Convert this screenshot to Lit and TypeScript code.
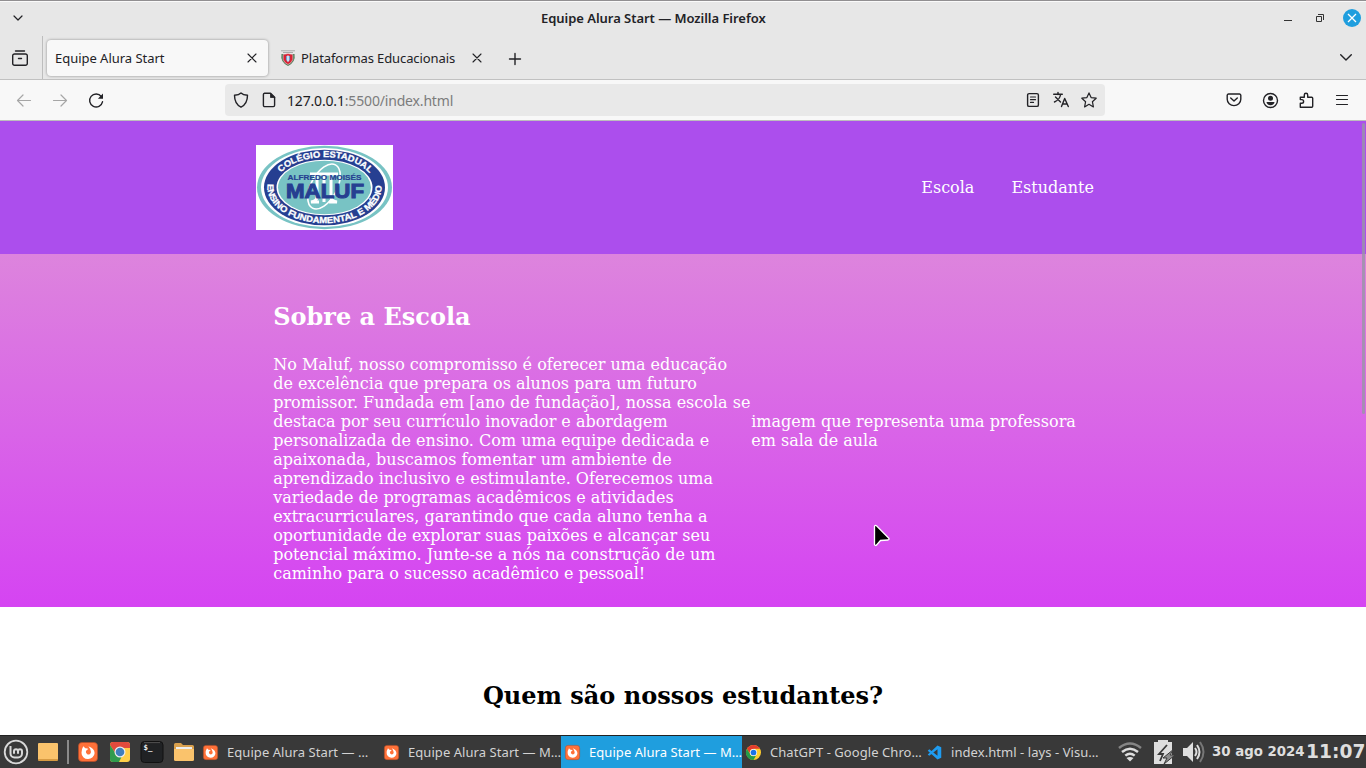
import { LitElement, html, css, svg } from "lit";
import { customElement } from "lit/decorators.js";

const firefox = svg`<rect x=".5" y=".5" width="19" height="19" rx="3.5" fill="#ff7139" stroke="#b94c27" stroke-width=".7"/><path d="M5.300 4.300 7.300 6.200q2.200-.2 3 .9L8.600 8.300a2.500 2.500 0 1 0 4.300 1.500q.1-2.600-2.500-5.600 6 2 6.200 6.800a6.500 6.200 0 0 1-13.100-.3q0-3.600 1.800-6.400Z" fill="#fff"/>`;
const chromeDisc = svg`<circle cx="10" cy="10" r="10" fill="#ffcd2e"/><path d="M1.3 5A10 10 0 0 1 18.7 5H10a5 5 0 0 0-4.4 7.5Z" fill="#e33b2e"/><path d="M1.3 5A10 10 0 0 0 10 20l4.3-7.5A5 5 0 0 1 5.7 12.5Z" fill="#249c49"/><circle cx="10" cy="10" r="4.8" fill="#fff"/><circle cx="10" cy="10" r="3.8" fill="#1a73e8"/>`;
const vscode = svg`<path d="M14 .8 19 3v14l-5 2.200L1 7.500 3 5.800l11 8.400V5.800L3 14.200 1 12.500Z" fill="#1f9cf0"/>`;

@customElement("app-root")
export class AppRoot extends LitElement {
  static styles = css`
    :host { display: flex; flex-direction: column; width: 1366px; height: 768px; overflow: hidden; background: #fff; font-family: "Noto Sans", sans-serif; color: #222226; }
    * { box-sizing: border-box; }
    svg { display: block; flex: none; overflow: visible; }
    .line { fill: none; stroke: currentColor; stroke-width: 1.4; stroke-linecap: round; stroke-linejoin: round; }
    .titlebar { height: 36px; flex: none; display: grid; grid-template-columns: 541px 226px 1fr; align-items: center; background: #e7e7e7; border-top: 1px solid #918f91; box-shadow: inset 0 1px #fafafa; }
    .titlebar .menu { margin: -2px 0 0 13px; }
    .titlebar h1 { margin: -2px 0 0; font: 600 13px/20px "Noto Sans", sans-serif; white-space: nowrap; letter-spacing: -.04px; }
    .controls { display: flex; justify-content: flex-end; align-items: center; gap: 18px; padding: 0 5px 2px 0; }
    .close-window { margin-left: -13px; }
    .tabs { height: 44px; flex: none; display: flex; background: #e7e7e7; border-bottom: 1px solid #c1c1c1; font-size: 13px; }
    .archive { width: 43px; border-right: 1px solid #bdbdbd; padding: 14px 0 0 12px; }
    .tab { display: flex; align-items: center; height: 36px; margin-top: 4px; white-space: nowrap; }
    .tab.active { width: 221px; margin-left: 4px; padding: 0 11px 0 8px; border-radius: 4px; background: #f8f8f8; box-shadow: 0 0 3px #0006; justify-content: space-between; }
    .tab.other { width: 214px; padding: 0 0 0 12px; }
    .tab .name { letter-spacing: -.03px; }
    .tab.other .name { width: 172px; margin-left: 5px; letter-spacing: -.1px; }
    .plus { margin: 17px 0 0 27px; }
    .all { margin: 18px 14px 0 auto; }
    .toolbar { height: 41px; flex: none; display: flex; align-items: center; background: #f8f8f8; border-bottom: 1px solid #bdbdbd; }
    .nav-icons { width: 225px; display: flex; gap: 20px; padding-left: 16px; }
    .off { color: #a6a6a6; }
    .address { width: 880px; height: 32px; display: flex; align-items: center; border-radius: 4px; background: #e9e9e9; padding: 0 8px; }
    .address .doc { margin-left: 12px; }
    .url { flex: 1; margin-left: 10px; padding-top: 2px; font-size: 14px; line-height: 20px; letter-spacing: -.17px; color: #7c7c7c; white-space: nowrap; }
    .url b { font-weight: 400; color: #1c1c1f; }
    .actions { display: flex; gap: 12px; }
    .tools { margin-left: auto; padding-right: 16px; display: flex; gap: 20px; }
    .page { position: relative; flex: 1; min-height: 0; overflow: hidden; background: #fff; font: 16px/19px "DejaVu Serif", serif; color: #fff; }
    .masthead { height: 133px; background: #ac4eed; display: flex; justify-content: space-between; align-items: center; padding: 0 272px 0 256px; }
    .links { display: flex; gap: 37px; }
    .links a { color: #fff; }
    .about { height: 353px; display: grid; grid-template-columns: 478px 342px; align-items: center; padding: 0 273.2px; background: linear-gradient(#dd84dd, #d544f2); }
    .about h2 { margin: 24px 0; font-size: 24px; line-height: 28px; }
    .about p { margin: 0; white-space: nowrap; }
    .caption { margin-top: 1px; white-space: nowrap; }
    .students { margin: 75px 0 0; text-align: center; color: #000; font-size: 24px; line-height: 28px; }
    .scroll { position: absolute; right: 1px; top: 2px; width: 3px; height: 291px; border-radius: 2px; background: #9996a6cc; }
    .cursor { position: absolute; left: 873px; top: 403px; }
    .taskbar { height: 33px; flex: none; display: flex; align-items: center; background: #393939; border-top: 1px solid #222; color: #d3d3d3; }
    .launchers { width: 199px; flex: none; display: flex; align-items: center; padding-left: 3px; }
    .note { flex: none; width: 20px; height: 18px; margin-left: 9px; background: #fac36c; border-bottom: 2px solid #d79b43; border-radius: 1px; }
    .divider { flex: none; width: 2px; height: 24px; margin: 0 9px; background: #8b8b8b; }
    .launchers .app { margin-right: 12px; }
    .launchers .app:last-child { margin-right: 0; }
    .task { width: 181px; height: 32px; flex: none; display: flex; align-items: center; padding-left: 4px; font-size: 13px; letter-spacing: .06px; white-space: nowrap; }
    .task span { margin-left: 9px; }
    .task.current { background: #1f9ede; color: #fff; }
    .tray { display: flex; align-items: center; margin-left: 14px; white-space: nowrap; font-family: "DejaVu Sans", sans-serif; font-weight: 700; color: #dedede; }
    .battery { margin-left: 12px; }
    .volume { margin-left: 9px; }
    .date { width: 94px; margin: -1px 0 0 7px; font-size: 13.33px; }
    .time { margin-top: -1px; font-size: 18.67px; }
    .seal-text { font: 700 8.8px "Liberation Sans", sans-serif; fill: #fff; stroke: #fff; stroke-width: .3; }
  `;

  private icon(body: unknown, size = 16, cls = "") {
    return html`<svg class="line ${cls}" width=${size} height=${size} viewBox="0 0 16 16">${body}</svg>`;
  }

  private close() {
    return html`<svg class="line" width="10" height="10" viewBox="0 0 10 10"><path d="m1 1 8 8M9 1 1 9" stroke-width="1.1"/></svg>`;
  }

  private seal() {
    return html`<svg width="137" height="85" viewBox="0 0 137 85" aria-label="Colégio Estadual Alfredo Moisés Maluf">
      <defs>
        <path id="upper" d="M25 27.500A50 29.500 0 0 1 114 29"/>
        <path id="lower" d="M12 38A57 35.500 0 1 0 125 38"/>
      </defs>
      <rect width="137" height="85" fill="#fff"/>
      <ellipse cx="68.5" cy="42.5" rx="67.5" ry="41.8" fill="#78c3c4"/>
      <ellipse cx="68.5" cy="42.5" rx="63.5" ry="39.5" fill="#fff"/>
      <ellipse cx="68.5" cy="42.5" rx="60.5" ry="37.8" fill="#263f91"/>
      <ellipse cx="68.5" cy="42.5" rx="48" ry="27.8" fill="#fff"/>
      <ellipse cx="68.5" cy="42.5" rx="46.5" ry="26.8" fill="#78c3c4"/>
      <g fill="none" stroke="#fff"><ellipse cx="68" cy="41.500" rx="13" ry="24.500" transform="rotate(28 68 41.500)" stroke-width="1.600"/><path d="M54 29h28M61 30v22q0 4-6 5h8M68 30v27M75 30v22q0 4 6 5h-8" stroke-width="3"/></g>
      <text class="seal-text"><textPath href="#upper" startOffset="0" textLength="96" lengthAdjust="spacingAndGlyphs">COLÉGIO ESTADUAL</textPath></text>
      <text class="seal-text"><textPath href="#lower" startOffset="1" textLength="153" lengthAdjust="spacingAndGlyphs">ENSINO FUNDAMENTAL E MÉDIO</textPath></text>
      <text x="31.500" y="35" textLength="74" lengthAdjust="spacingAndGlyphs" font-family="Liberation Sans" font-size="7.300" font-weight="700" fill="#263f91" stroke="#263f91" stroke-width=".2">ALFREDO MOISÉS</text>
      <text x="30" y="53.300" textLength="78" lengthAdjust="spacingAndGlyphs" font-family="Liberation Sans" font-size="19.500" font-weight="700" fill="#263f91" stroke="#263f91" stroke-width="1">MALUF</text>
    </svg>`;
  }

  private app(body: unknown, size = 20) {
    return html`<svg class="app" width=${size} height=${size} viewBox="0 0 20 20">${body}</svg>`;
  }

  private task(body: unknown, label: string, current = false, size = 15) {
    return html`<div class="task ${current ? "current" : ""}"><svg width=${size} height=${size} viewBox="0 0 20 20">${body}</svg><span>${label}</span></div>`;
  }

  render() {
    return html`
      <header class="titlebar">
        <svg class="line menu" width="10" height="6" viewBox="0 0 10 6"><path d="m1 1 4 4 4-4" stroke-width="1.2"/></svg>
        <h1>Equipe Alura Start — Mozilla Firefox</h1>
        <div class="controls">
          <svg width="8" height="8" viewBox="0 0 8 8"><path d="M0 6.5h8" stroke="#333"/></svg>
          <svg width="28" height="8" viewBox="0 0 28 8"><path d="M6.500 2.500h5v5h-5ZM8 .500h5.500v5.500" fill="none" stroke="#333"/></svg>
          <svg class="close-window" width="18" height="18" viewBox="0 0 18 18"><circle cx="9" cy="9" r="9" fill="#1f9ede"/><path d="m5 5 8 8m0-8-8 8" stroke="#fff" stroke-width="1.3"/></svg>
        </div>
      </header>
      <div class="tabs">
        <div class="archive">${this.icon(svg`<path d="M3.500 1h9M2.500 4h11a1.800 1.800 0 0 1 1.800 1.800V13.500a1.800 1.800 0 0 1-1.800 1.800h-11A1.800 1.800 0 0 1 .7 13.500V5.800A1.800 1.800 0 0 1 2.500 4ZM6.500 8.500h3"/>`)}</div>
        <div class="tab active"><span class="name">Equipe Alura Start</span>${this.close()}</div>
        <div class="tab other">
          <svg width="16" height="16" viewBox="0 0 16 16"><path d="M1 .8h14M3 2.500h10" stroke="#aaa"/><path d="M1.500 4q-1.500 8 6.500 12 8-4 6.500-12Z" fill="#527b59"/><path d="M3.200 4.500 8 3.500l4.800 1v5q-1 3.500-4.800 5-3.800-1.500-4.800-5Z" fill="#d92335" stroke="#eee" stroke-width=".5"/><path d="M6 6h4v4l-2 2-2-2Z" fill="#6f9dcc"/><path d="M8 5.500v6" stroke="#fff" stroke-width="1.300"/></svg>
          <span class="name">Plataformas Educacionais</span>${this.close()}
        </div>
        <svg class="line plus" width="12" height="12" viewBox="0 0 12 12"><path d="M6 .5v11M.5 6h11"/></svg>
        <svg class="line all" width="12" height="7" viewBox="0 0 12 7"><path d="m.7.7 5.300 5.300L11.300.7"/></svg>
      </div>
      <div class="toolbar">
        <div class="nav-icons">
          ${this.icon(svg`<path d="M14.500 8.500h-13m5.500-5.500L1.500 8.500 7 14" stroke-width="1.200"/>`, 16, "off")}
          ${this.icon(svg`<path d="M1.500 8.500h13M9 3 14.500 8.500 9 14" stroke-width="1.200"/>`, 16, "off")}
          ${this.icon(svg`<path d="M13.300 4.500A6.500 6.500 0 1 0 14.500 9.800"/><path d="M15 1.500v5.200H9.900Z" fill="currentColor" stroke="none"/>`)}
        </div>
        <div class="address">
          ${this.icon(svg`<path d="M8 .9C6.500 2.300 4 3 1.500 3.300c0 5.500 2 9.700 6.500 11.900 4.500-2.200 6.500-6.400 6.500-11.900C12 3 9.500 2.300 8 .9Z"/>`)}
          ${this.icon(svg`<path d="M3.500 1.200h6L13.600 5.300v8a1.300 1.300 0 0 1-1.300 1.300H3.700a1.300 1.300 0 0 1-1.300-1.300V2.500a1.300 1.300 0 0 1 1.100-1.300Z"/><path d="M9.500 1.500v4h4Z" fill="currentColor" stroke-width=".8"/>`, 16, "doc")}
          <span class="url"><b>127.0.0.1</b>:5500/index.html</span>
          <div class="actions">
            ${this.icon(svg`<rect x="2.600" y="1.600" width="10.800" height="12.800" rx="1.500"/><path d="M5.500 5h5M5.500 7.700h5M5.500 10.400h3" stroke-width="1.200"/>`)}
            ${this.icon(svg`<path d="M.7 2.300h8.600M5 .5v2M2.500 5l5 5M7.600 2.500C7 6 4.500 8.700 1.500 10M8.500 14.500 11.700 6.500l3.600 8M9.600 12h4.500"/>`)}
            ${this.icon(svg`<path d="m8 .9 2.100 4.700 5.100.6-3.800 3.500 1 5.200L8 12.300l-4.400 2.600 1-5.200L.8 6.200l5.100-.6Z" stroke-width="1.200"/>`)}
          </div>
        </div>
        <div class="tools">
          ${this.icon(svg`<path d="M2.500 2h11a1.300 1.300 0 0 1 1.300 1.300v4a6.800 6.300 0 0 1-13.600 0v-4A1.300 1.300 0 0 1 2.500 2ZM4.700 6 8 9.100 11.300 6"/>`)}
          ${this.icon(svg`<circle cx="8.500" cy="8.500" r="7"/><circle cx="8.500" cy="6.300" r="2.500" fill="currentColor" stroke="none"/><path d="M4.500 10h8c0 2-1.700 3.200-4 3.200S4.500 12 4.500 10Z" fill="currentColor" stroke="none"/>`)}
          ${this.icon(svg`<path d="M2.300 15.200v-4h1.500a1.800 1.800 0 0 0 0-3.600H2.300V5.200h4V3a1.700 1.700 0 0 1 3.400 0v2.200h4a1 1 0 0 1 1 1v8a1 1 0 0 1-1 1Z"/>`)}
          ${this.icon(svg`<path d="M2.500 3.500h11M2.500 7.500h11M2.500 12.500h11" stroke-width="1.200"/>`)}
        </div>
      </div>
      <main class="page">
        <header class="masthead">${this.seal()}<nav class="links"><a>Escola</a><a>Estudante</a></nav></header>
        <section class="about">
          <div><h2>Sobre a Escola</h2>
          <p>No Maluf, nosso compromisso é oferecer uma educação<br>de excelência que prepara os alunos para um futuro<br>promissor. Fundada em [ano de fundação], nossa escola se<br>destaca por seu currículo inovador e abordagem<br>personalizada de ensino. Com uma equipe dedicada e<br>apaixonada, buscamos fomentar um ambiente de<br>aprendizado inclusivo e estimulante. Oferecemos uma<br>variedade de programas acadêmicos e atividades<br>extracurriculares, garantindo que cada aluno tenha a<br>oportunidade de explorar suas paixões e alcançar seu<br>potencial máximo. Junte-se a nós na construção de um<br>caminho para o sucesso acadêmico e pessoal!</p></div>
          <div class="caption">imagem que representa uma professora<br>em sala de aula</div>
        </section>
        <h2 class="students">Quem são nossos estudantes?</h2>
        <div class="scroll"></div>
        <svg class="cursor" width="17" height="22" viewBox="0 0 17 22"><path d="M1.500 2.500v18q1 1.800 2.300.3l3.700-4.300 7.500-.5q1.800-.7.600-2L3.500 1.800Q2 .8 1.500 2.500Z" fill="#000" stroke="#fff" stroke-width="1.300"/></svg>
      </main>
      <footer class="taskbar">
        <div class="launchers">
          <svg width="26" height="26" viewBox="0 0 26 26"><circle cx="13" cy="13" r="11.300" fill="none" stroke="#d8d8d8" stroke-width="1.800"/><path d="M7.500 7v7.500a4 4 0 0 0 4 4h3.500a4 4 0 0 0 4-4v-2.200a2 2 0 0 0-4 0v2.500m0-2.500a2 2 0 0 0-4 0v2.500" fill="none" stroke="#d8d8d8" stroke-width="2"/></svg>
          <i class="note"></i><i class="divider"></i>
          ${this.app(firefox)}
          ${this.app(svg`<rect width="20" height="20" rx="3" fill="#ffcf48"/><path d="M0 3a3 3 0 0 1 3-3h14a3 3 0 0 1 3 3v3H10L6 12 0 3Z" fill="#e14b3d"/><path d="M0 3v14a3 3 0 0 0 3 3h6l4-8H6Z" fill="#309b4d"/><circle cx="10" cy="10" r="5.500" fill="#eee"/><circle cx="10" cy="10" r="4.300" fill="#3f7fbd"/>`)}
          ${this.app(svg`<rect x="-1" y="-.5" width="22" height="21" rx="3.500" fill="#202224" stroke="#111"/><path d="M2 .6h16" stroke="#505050"/><text x="1.500" y="8" font-family="DejaVu Sans Mono" font-weight="700" font-size="7.500" fill="#eee">$_</text>`)}
          ${this.app(svg`<path d="M0 2.500Q0 1 1.500 1H7l2 2h9.500Q20 3 20 4.500V9H0Z" fill="#d9a04d"/><path d="M2 5h16v4H2Z" fill="#eee"/><path d="M0 7h20v10.500q0 1.500-1.500 1.500h-17Q0 19 0 17.500Z" fill="#fac36c"/>`)}
        </div>
        ${this.task(firefox, "Equipe Alura Start — …")}
        ${this.task(firefox, "Equipe Alura Start — M…")}
        ${this.task(firefox, "Equipe Alura Start — M…", true)}
        ${this.task(chromeDisc, "ChatGPT - Google Chro…")}
        ${this.task(vscode, "index.html - lays - Visu…")}
        <div class="tray">
          <svg width="24" height="20" viewBox="0 0 24 20"><g fill="none" stroke-width="2.500"><path d="M1 6Q12-3 23 6" stroke="#858585"/><path d="M4 10q8-6.500 16 0M7.300 13.600q4.700-3.800 9.400 0" stroke="#dedede"/></g><path d="M8.500 16q3.500-2 7 0L12 19.500Z" fill="#dedede"/></svg>
          <svg class="battery" width="20" height="24" viewBox="0 0 20 24"><path d="M5 3V1h8v2h4v20H1V3Z" fill="#dedede" stroke="#dedede" stroke-width="2"/><path d="M13 5 5 14h4l-3 7" fill="none" stroke="#393939" stroke-width="1.800"/><path d="M20 9 9 18h4l-3 6 11-9h-5Z" fill="#8d8d8d" stroke="#393939" stroke-width="1"/></svg>
          <svg class="volume" width="22" height="22" viewBox="0 0 22 22"><path d="M0 7h4l6-6v20l-6-6H0Z" fill="#dedede"/><path d="M12 7q3 4 0 8M14 4q5 7 0 14" fill="none" stroke="#dedede" stroke-width="2"/><path d="M17 1q7 10 0 20" fill="none" stroke="#777" stroke-width="2"/></svg>
          <span class="date">30 ago 2024</span><span class="time">11:07</span>
        </div>
      </footer>`;
  }
}
